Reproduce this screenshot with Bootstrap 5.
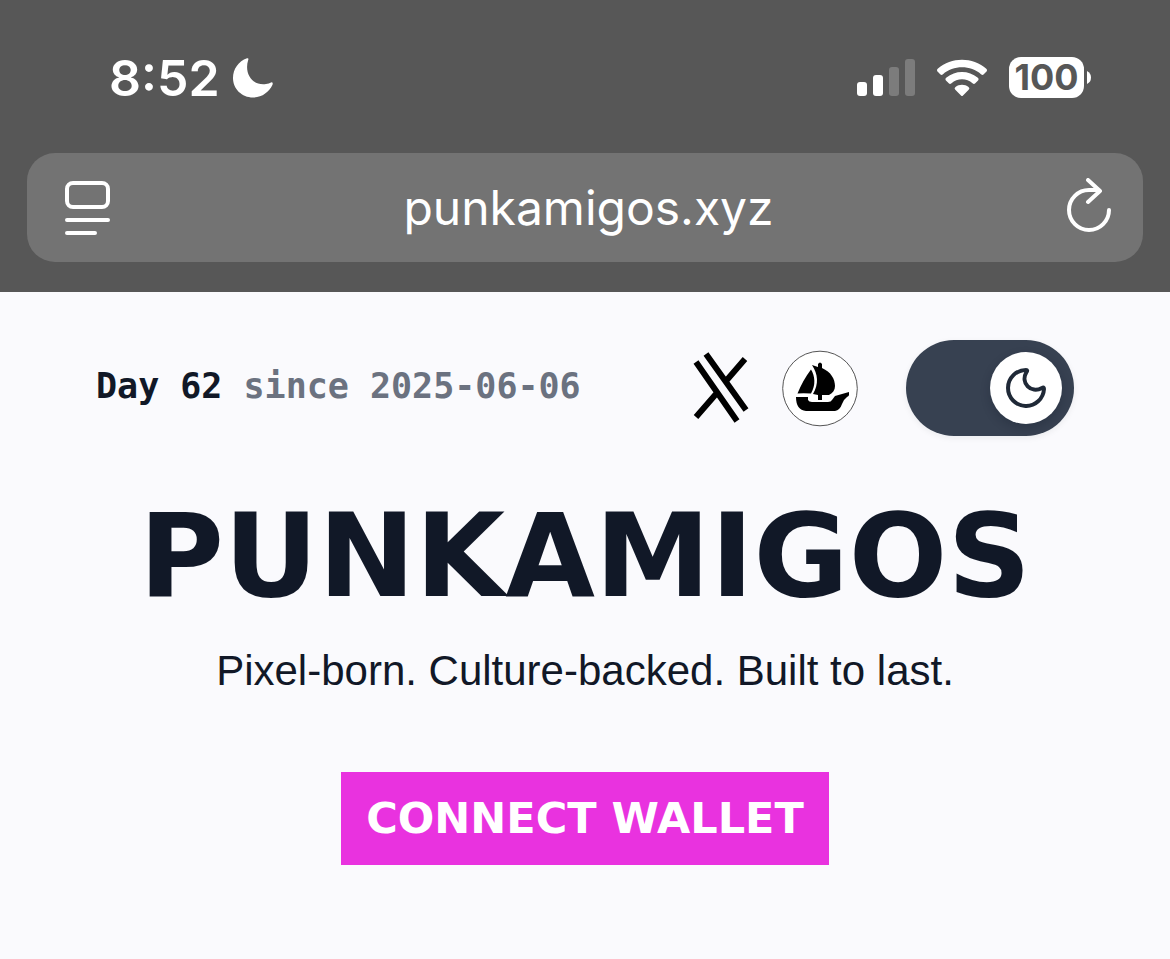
<!DOCTYPE html>
<html lang="en">
<head>
<meta charset="utf-8">
<meta name="viewport" content="width=device-width, initial-scale=1">
<title>PUNKAMIGOS</title>
<link href="https://cdn.jsdelivr.net/npm/bootstrap@5.3.0/dist/css/bootstrap.min.css" rel="stylesheet">
<style>
  body { background: #fafafd; color: #111827; font-family: "Liberation Sans", Arial, sans-serif; }
  svg { display: block; flex: none; }
  .browser-top { background: #575757; color: #fff; font-family: Inter, sans-serif; padding: 0 27px 30px; }
  .status-row { height: 153px; padding: 2px 52px 0 82px; }
  .clock { font-size: 50px; font-weight: 600; line-height: 60px; margin-right: 13px; }
  .status-icons { gap: 22px; }
  .battery-level { width: 75px; height: 41px; border-radius: 12px; background: #fff; color: #575757; font-size: 36px; font-weight: 700; line-height: 41px; text-align: center; }
  .battery-cap { margin-left: 3px; }
  .address-bar { height: 109px; border-radius: 28px; background: #737373; padding: 0 31px 0 37px; }
  .address-bar input { min-width: 0; background: none; border: 0; color: #fff; font-size: 48px; line-height: 60px; text-align: center; outline: 0; padding: 0; }
  .plain-btn { background: none; border: 0; color: #fff; padding: 0; }
  .site { padding: 48px 96px 94px; }
  .pixel { font-family: "DejaVu Sans", sans-serif; font-weight: 700; }
  .day-count { font-family: "DejaVu Sans Mono", monospace; font-size: 35px; font-weight: 700; line-height: 48px; padding-bottom: 4px; }
  .since { color: #6b7280; }
  .social { gap: 32px; margin-right: 48px; }
  .theme-switch { position: relative; width: 168px; height: 96px; }
  .theme-switch .form-check-input { width: 168px; height: 96px; margin: 0; border: 0; border-radius: 48px; background: #374151; box-shadow: 0 2px 6px #11182710; }
  .theme-switch .knob { position: absolute; top: 12px; right: 12px; width: 72px; height: 72px; border-radius: 50%; background: #fff; box-shadow: 0 4px 10px #11182740; pointer-events: none; }
  .site-title { font-size: 116px; line-height: 120px; margin: 60px -20px 0; }
  .tagline { font-size: 42px; line-height: 60px; margin: 25px 0 0; }
  .wallet-btn { margin-top: 71px; padding: 16px 25px; border: 0; border-radius: 0; background: #e932df; color: #fff; font-size: 43px; line-height: 61px; }
</style>
</head>
<body>
<header class="browser-top">
  <div class="status-row d-flex align-items-center justify-content-between">
    <div class="d-flex align-items-center">
      <span class="clock">8:52</span>
      <svg width="40" height="40" viewBox="0 0 40 40" fill="#fff" aria-hidden="true"><path d="M14 0.3Q16-.3 15.200 2C11 15 19 28 33 26Q36 25.500 38 24.400Q40.500 24 39.400 27C36 34 29 39.500 20 39.500C9 39.500 0 31 0 20C0 11 5.500 3.400 14 .3Z"/></svg>
    </div>
    <div class="status-icons d-flex align-items-center">
      <svg width="58" height="38" viewBox="0 0 58 38" fill="#fff" aria-hidden="true"><rect y="23" width="10" height="14" rx="3"/><rect x="16" y="16" width="10" height="21" rx="3"/><g fill="#7c7c7c"><rect x="32" y="8" width="10" height="29" rx="3"/><rect x="48" width="10" height="37" rx="3"/></g></svg>
      <svg width="50" height="38" viewBox="0 0 50 38" fill="#fff" aria-hidden="true"><path d="M1 9.500C14-2.300 36-2.300 49 9.500Q51 11 49 13L46.500 15.500Q45.500 16.500 44 15.200C34 6 16 6 6 15.200Q4.500 16.500 3.500 15.500L1 13Q-1 11 1 9.500Z"/><path d="M9.500 18.500C18 11 32 11 40.500 18.500Q42.500 20 40.800 21.800L38 24.500Q37 25.500 35.500 24.300C30 19 20 19 14.500 24.300Q13 25.500 12 24.500L9.200 21.800Q7.500 20 9.500 18.500Z"/><path d="M18.500 28C22 25 28 25 31.500 28Q33.300 29.300 31.700 30.800L26 36.500Q25 37.500 24 36.500L18.300 30.800Q16.700 29.300 18.500 28Z"/></svg>
      <div class="d-flex align-items-center">
        <span class="battery-level">100</span>
        <svg class="battery-cap" width="4" height="13" viewBox="0 0 4 13" fill="#fff" aria-hidden="true"><path d="M0 0Q4 2 4 6.500T0 13Z"/></svg>
      </div>
    </div>
  </div>
  <div class="address-bar d-flex align-items-center">
    <button class="plain-btn" type="button" aria-label="Page menu">
      <svg width="47" height="56" viewBox="0 0 47 56" fill="none" stroke="#fff" stroke-width="4" stroke-linecap="round" aria-hidden="true"><rect x="3" y="3" width="41" height="24" rx="6"/><path d="M3 40H44M3 53H31"/></svg>
    </button>
    <input class="flex-fill" type="text" value="punkamigos.xyz" aria-label="Address">
    <button class="plain-btn" type="button" aria-label="Reload">
      <svg width="46" height="60" viewBox="0 0 46 60" fill="none" stroke="#fff" stroke-width="4" stroke-linecap="round" stroke-linejoin="round" aria-hidden="true"><path d="M43 32A20 20 0 1 1 23 12H33M22 2L34 13L22 24"/></svg>
    </button>
  </div>
</header>

<main class="site">
  <div class="d-flex align-items-center">
    <p class="day-count mb-0 me-auto text-nowrap">Day 62 <span class="since">since 2025-06-06</span></p>
    <nav class="social d-flex align-items-center" aria-label="Social links">
      <a href="#x" aria-label="X">
        <svg width="57" height="72" viewBox="0 0 57 72" fill="none" stroke="#000" stroke-width="6" aria-hidden="true"><path d="M3 10L44 69M13 2L53 58M52 7L33 29M3 65L23 42"/></svg>
      </a>
      <a href="#opensea" aria-label="OpenSea">
        <svg width="76" height="77" viewBox="0 0 76 77" aria-hidden="true"><circle cx="38" cy="38.500" r="37.300" fill="#fff" stroke="#555"/><path d="M29 19.500C33 26 34 35 29 43.500Q21 43 15.500 43.500Q21 30 29 19.500ZM30 15L36 17V14Q38 11 40 14V18C49 22 53 29 53 36C53 40 51 43 47 45H40V50H36V45L31 44C37 34 36 24 30 15ZM14 47H26V50Q27 52 30 52H46Q49 52 50 50L53 46L67 42V45Q67 46 65 47Q62 49 60 54Q58 60 53 61H24Q14 60 14 47Z"/></svg>
      </a>
    </nav>
    <div class="theme-switch">
      <input class="form-check-input" type="checkbox" role="switch" aria-label="Dark theme">
      <span class="knob d-flex align-items-center justify-content-center">
        <svg width="40" height="40" viewBox="0 0 40 40" fill="none" stroke="#1f2937" stroke-width="4" stroke-linejoin="round" aria-hidden="true"><path d="M20 2Q22 2 20.500 4C14 15 25 26 36 20Q38 18.500 38 21A18 18 0 1 1 20 2Z"/></svg>
      </span>
    </div>
  </div>
  <div class="text-center">
    <h1 class="site-title pixel">PUNKAMIGOS</h1>
    <p class="tagline">Pixel-born. Culture-backed. Built to last.</p>
    <button class="wallet-btn btn pixel" type="button">CONNECT WALLET</button>
  </div>
</main>
<script src="https://cdn.jsdelivr.net/npm/bootstrap@5.3.0/dist/js/bootstrap.bundle.min.js"></script>
</body>
</html>
